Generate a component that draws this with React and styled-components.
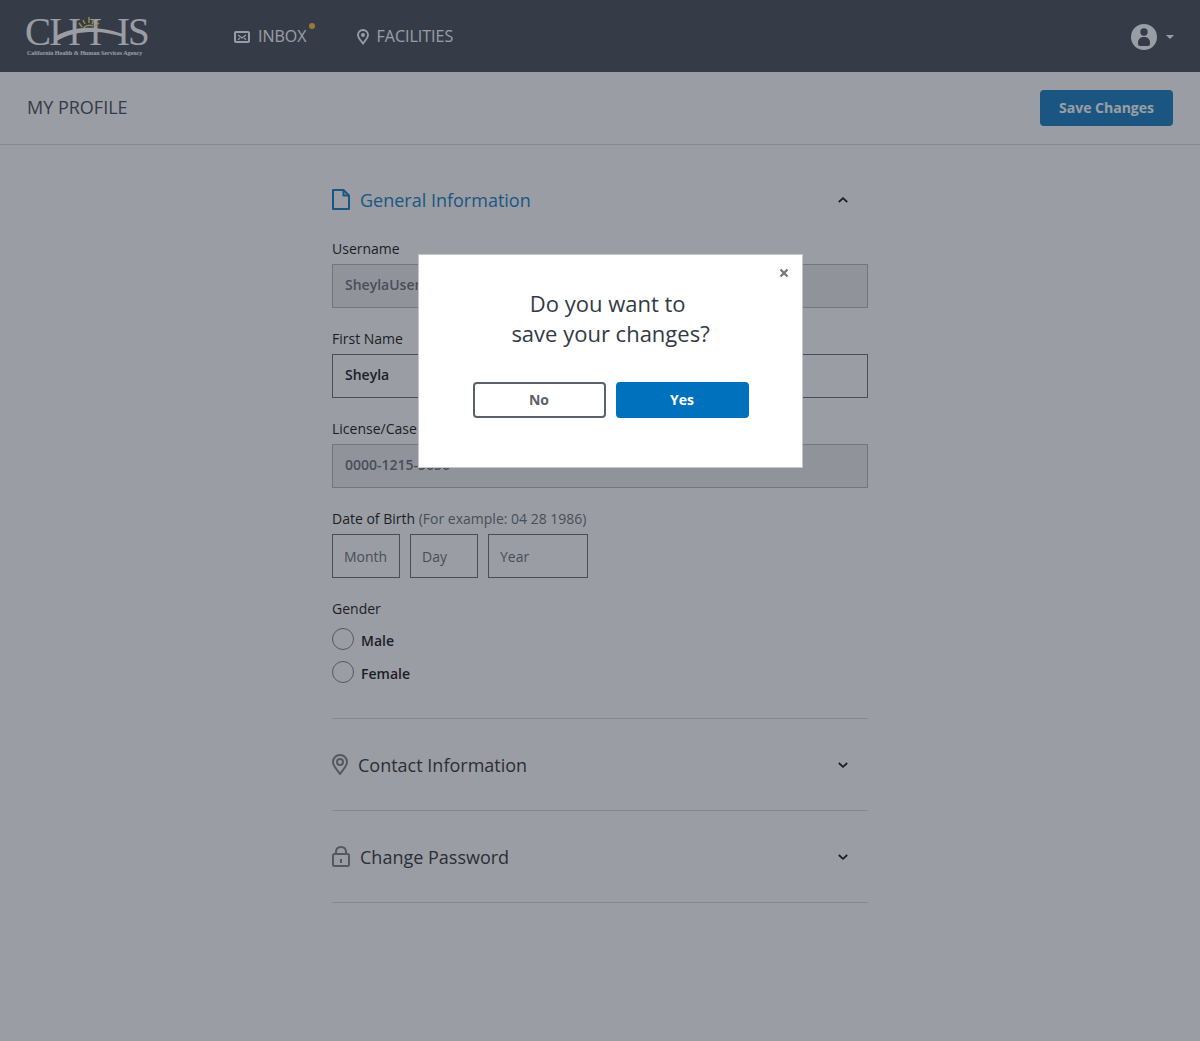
import React, { useState } from 'react';
import styled, { createGlobalStyle } from 'styled-components';

const navy = '#353c48';
const blue = '#0071bc';
const gray = '#5b616b';

const GlobalStyle = createGlobalStyle`
  *, *::before, *::after { box-sizing: border-box; }
  body {
    margin: 0;
    background: #fff;
    color: #000;
    font-family: 'Open Sans', 'Noto Sans', sans-serif;
    font-size: 14px;
    line-height: 20px;
  }
  button, input { font: inherit; color: inherit; }
`;

const Page = styled.div`
  min-height: 100vh;
`;

const TopBar = styled.header`
  display: flex;
  align-items: center;
  height: 72px;
  padding: 2px 26px 0 24px;
  background: ${navy};
  color: #fff;
`;

const Brand = styled.a`
  display: block;
  height: 70px;
  color: inherit;
`;

const Nav = styled.nav`
  display: flex;
  gap: 50px;
  flex: 1;
  margin-left: 82px;
`;

const NavLink = styled.a`
  position: relative;
  display: flex;
  align-items: center;
  gap: 8px;
  color: inherit;
  font-size: 16px;
  font-weight: 500;
  line-height: 24px;
  text-decoration: none;
`;

const NavText = styled.span`
  padding-bottom: 2px;
`;

const Dot = styled.span`
  position: absolute;
  top: -1px;
  right: -8px;
  width: 6px;
  height: 6px;
  border-radius: 50%;
  background: #fdb81e;
`;

const AccountButton = styled.button`
  display: flex;
  align-items: center;
  gap: 9px;
  padding: 0;
  border: 0;
  background: none;
`;

const TitleBar = styled.div`
  display: flex;
  align-items: center;
  justify-content: space-between;
  height: 73px;
  padding: 0 27px;
  border-bottom: 1px solid #d6d7d9;
`;

const PageTitle = styled.h1`
  margin: 0;
  padding-bottom: 2px;
  color: #323a45;
  font-size: 18px;
  font-weight: 400;
  line-height: 24px;
`;

const Button = styled.button`
  width: 133px;
  height: 36px;
  padding: 0;
  border: 2px solid ${(p) => (p.$outline ? gray : blue)};
  border-radius: 4px;
  background: ${(p) => (p.$outline ? '#fff' : blue)};
  color: ${(p) => (p.$outline ? gray : '#fff')};
  font-weight: 700;
`;

const Main = styled.main`
  width: 100%;
  max-width: 536px;
  margin: 0 auto;
  padding-top: 9px;
`;

const Section = styled.section`
  padding: 21px 0;
  border-bottom: 1px solid #d6d7d9;
`;

const SectionHeading = styled.h2`
  margin: 0;
`;

const SectionToggle = styled.button`
  display: flex;
  align-items: center;
  gap: 10px;
  width: 100%;
  height: 49px;
  padding: 0 20px 0 0;
  border: 0;
  background: none;
  color: ${(p) => (p.$open ? blue : '#212121')};
  font-size: 18px;
  font-weight: 400;
  line-height: 24px;
  text-align: left;
`;

const SectionTitle = styled.span`
  flex: 1;
`;

const Fields = styled.form`
  display: flex;
  flex-direction: column;
  gap: 21px;
  padding: 15px 0 14px;
`;

const Field = styled.div`
  display: flex;
  flex-direction: column;
  gap: 5px;
`;

const Group = styled.fieldset`
  margin: 0;
  padding: 0;
  border: 0;
`;

const Legend = styled.legend`
  padding: 0;
  margin-bottom: ${(p) => (p.$spaced ? 9 : 5)}px;
`;

const Hint = styled.span`
  color: ${gray};
`;

const TextInput = styled.input`
  width: 100%;
  height: 44px;
  padding: 0 12px 3px;
  border: 1px solid ${gray};
  border-radius: 0;
  background: #fff;
  font-weight: 600;
  &:disabled {
    border-color: #aeb0b5;
    background: #ebebed;
    color: ${gray};
  }
`;

const DateRow = styled.div`
  display: flex;
  gap: 10px;
`;

const DateInput = styled.input`
  width: ${(p) => (p.$wide ? 100 : 68)}px;
  height: 44px;
  padding: 0 11px;
  border: 1px solid ${gray};
  border-radius: 0;
  background: #fff;
  &::placeholder { color: ${gray}; opacity: 1; }
`;

const RadioList = styled.div`
  display: flex;
  flex-direction: column;
  gap: 11px;
`;

const RadioLabel = styled.label`
  display: flex;
  align-items: center;
  gap: 7px;
  height: 22px;
  font-weight: 600;
`;

const Radio = styled.input`
  appearance: none;
  width: 22px;
  height: 22px;
  margin: 0;
  border: 1px solid #757575;
  border-radius: 50%;
  &:checked { background: ${blue}; box-shadow: inset 0 0 0 4px #fff; }
`;

const RadioText = styled.span`
  padding-top: 3px;
`;

const Overlay = styled.div`
  position: fixed;
  inset: 0;
  display: flex;
  align-items: flex-start;
  justify-content: center;
  padding: 254px 0 0 21px;
  background: rgba(53, 60, 72, 0.5);
`;

const Modal = styled.div`
  position: relative;
  width: 385px;
  padding: 33px 20px 49px;
  border: 1px solid #c4c6ca;
  background: #fff;
  text-align: center;
`;

const CloseButton = styled.button`
  position: absolute;
  top: 8px;
  right: 8px;
  display: flex;
  align-items: center;
  justify-content: center;
  width: 20px;
  height: 20px;
  padding: 0;
  border: 0;
  background: none;
`;

const ModalTitle = styled.h2`
  margin: 0 0 34px;
  color: #323a45;
  font-size: 22px;
  font-weight: 400;
  line-height: 30px;
`;

const Actions = styled.div`
  display: flex;
  justify-content: center;
  gap: 10px;
`;

const Logo = () => (
  <svg width="128" height="70" viewBox="-2 -12 128 70" role="img" aria-label="CHHS" fill="currentColor">
    <g fontFamily="'Liberation Serif', serif" fontSize="39">
      <text x="-1" y="31">C</text>
      <text x="23" y="31">I</text>
      <text x="42" y="31">I</text>
      <text x="63" y="31">I</text>
      <text x="91" y="31">I</text>
      <text x="102" y="31">S</text>
    </g>
    <path d="M30 22 C42 15 58 13 68 14 C80 15 88 17 97 20 L97 23 C88 20 78 18 68 18 C54 18 42 20 29 28 Z" />
    <g stroke="#f7d64a" strokeWidth="1.5" fill="none">
      <path d="M57 14 Q62 10 67 12" />
      <path d="M53 9 L56 13 M57 6 L59 10 M63 3 V9 M68 5 L66 10 M73 9 L69 12" />
    </g>
    <text x="1" y="41" fontFamily="'Liberation Serif', serif" fontSize="6" fontWeight="700">California Health &amp; Human Services Agency</text>
  </svg>
);

const InboxIcon = () => (
  <svg width="16" height="12" viewBox="0 0 16 12" fill="none" stroke="currentColor" aria-hidden="true">
    <rect x="1" y="1" width="14" height="10" rx="1" strokeWidth="2" />
    <path d="M4 4 L8 7 L12 4 M4 8.7 L6 7 M12 8.7 L10 7" strokeWidth="1.2" />
  </svg>
);

const FacilityIcon = () => (
  <svg width="12" height="16" viewBox="0 0 12 16" aria-hidden="true">
    <path d="M6 1 C3.2 1 1 3.2 1 6 C1 9 4.2 12 6 14.6 C7.8 12 11 9 11 6 C11 3.2 8.8 1 6 1 Z" fill="none" stroke="currentColor" strokeWidth="1.8" />
    <circle cx="6" cy="6" r="2" fill="currentColor" />
  </svg>
);

const AvatarIcon = () => (
  <svg width="26" height="26" viewBox="0 0 26 26" aria-hidden="true">
    <circle cx="13" cy="13" r="13" fill="#fff" />
    <circle cx="13" cy="8" r="3.7" fill={navy} />
    <path d="M7 20 V18.5 C7 15 9.5 13 13 13 C16.5 13 19 15 19 18.5 V20 Q19 22 17 22 H9 Q7 22 7 20 Z" fill={navy} />
  </svg>
);

const CaretIcon = () => (
  <svg width="8" height="4" viewBox="0 0 8 4" aria-hidden="true">
    <path d="M0 0 H8 L4 4 Z" fill="#fff" />
  </svg>
);

const FileIcon = () => (
  <svg width="18" height="21" viewBox="0 0 18 21" fill="none" stroke="currentColor" strokeWidth="2" strokeLinejoin="round" aria-hidden="true">
    <path d="M1 1 H11.5 L17 6.5 V20 H1 Z" />
    <path d="M11.5 1 V6.5 H17" />
  </svg>
);

const PinIcon = () => (
  <svg width="16" height="21" viewBox="0 0 16 21" fill="none" stroke="#757575" strokeWidth="2" strokeLinejoin="round" aria-hidden="true">
    <path d="M8 1 C4 1 1 4 1 8 C1 12 5 15.5 8 20 C11 15.5 15 12 15 8 C15 4 12 1 8 1 Z" />
    <circle cx="8" cy="8" r="3" />
  </svg>
);

const LockIcon = () => (
  <svg width="18" height="21" viewBox="0 0 18 21" fill="none" stroke="#757575" strokeWidth="2" aria-hidden="true">
    <rect x="1" y="8" width="16" height="12" rx="1.5" />
    <path d="M4 8 V6 C4 3 6 1 9 1 C12 1 14 3 14 6 V8 M9 13 V17" />
  </svg>
);

const Chevron = ({ up }) => (
  <svg width="10" height="6" viewBox="0 0 10 6" fill="none" stroke="#000" strokeWidth="1.8" aria-hidden="true">
    <path d={up ? 'M0.8 5 L5 1.2 L9.2 5' : 'M0.8 1 L5 4.8 L9.2 1'} />
  </svg>
);

const AccordionSection = ({ icon, title, open, onToggle, children }) => (
  <Section>
    <SectionHeading>
      <SectionToggle type="button" $open={open} aria-expanded={open} onClick={onToggle}>
        {icon}
        <SectionTitle>{title}</SectionTitle>
        <Chevron up={open} />
      </SectionToggle>
    </SectionHeading>
    {open && children}
  </Section>
);

const GeneralForm = () => (
  <Fields>
    <Field>
      <label htmlFor="username">Username</label>
      <TextInput id="username" defaultValue="SheylaUser" disabled />
    </Field>
    <Field>
      <label htmlFor="first-name">First Name</label>
      <TextInput id="first-name" defaultValue="Sheyla" />
    </Field>
    <Field>
      <label htmlFor="license">License/Case</label>
      <TextInput id="license" defaultValue="0000-1215-5656" disabled />
    </Field>
    <Group>
      <Legend>
        Date of Birth <Hint>(For example: 04 28 1986)</Hint>
      </Legend>
      <DateRow>
        <DateInput aria-label="Month" placeholder="Month" />
        <DateInput aria-label="Day" placeholder="Day" />
        <DateInput aria-label="Year" placeholder="Year" $wide />
      </DateRow>
    </Group>
    <Group>
      <Legend $spaced>Gender</Legend>
      <RadioList>
        {['Male', 'Female'].map((name) => (
          <RadioLabel key={name}>
            <Radio type="radio" name="gender" value={name} />
            <RadioText>{name}</RadioText>
          </RadioLabel>
        ))}
      </RadioList>
    </Group>
  </Fields>
);

export default function App() {
  const [confirming, setConfirming] = useState(true);
  const [openSection, setOpenSection] = useState('general');
  const toggle = (name) => () => setOpenSection(openSection === name ? '' : name);
  const close = () => setConfirming(false);

  return (
    <>
      <GlobalStyle />
      <Page>
        <TopBar>
          <Brand href="#home"><Logo /></Brand>
          <Nav>
            <NavLink href="#inbox"><InboxIcon /><NavText>INBOX</NavText><Dot /></NavLink>
            <NavLink href="#facilities"><FacilityIcon /><NavText>FACILITIES</NavText></NavLink>
          </Nav>
          <AccountButton type="button" aria-label="Account">
            <AvatarIcon />
            <CaretIcon />
          </AccountButton>
        </TopBar>
        <TitleBar>
          <PageTitle>MY PROFILE</PageTitle>
          <Button type="button" onClick={() => setConfirming(true)}>Save Changes</Button>
        </TitleBar>
        <Main>
          <AccordionSection icon={<FileIcon />} title="General Information" open={openSection === 'general'} onToggle={toggle('general')}>
            <GeneralForm />
          </AccordionSection>
          <AccordionSection icon={<PinIcon />} title="Contact Information" open={openSection === 'contact'} onToggle={toggle('contact')} />
          <AccordionSection icon={<LockIcon />} title="Change Password" open={openSection === 'password'} onToggle={toggle('password')} />
        </Main>
      </Page>
      {confirming && (
        <Overlay>
          <Modal role="dialog" aria-modal="true" aria-labelledby="confirm-title">
            <CloseButton type="button" aria-label="Close" onClick={close}>
              <svg width="8" height="8" viewBox="0 0 8 8" stroke="#757575" strokeWidth="2.2" aria-hidden="true">
                <path d="M0.5 0.5 L7.5 7.5 M7.5 0.5 L0.5 7.5" />
              </svg>
            </CloseButton>
            <ModalTitle id="confirm-title">Do you want to&nbsp;<br />save your changes?</ModalTitle>
            <Actions>
              <Button type="button" $outline onClick={close}>No</Button>
              <Button type="button" onClick={close}>Yes</Button>
            </Actions>
          </Modal>
        </Overlay>
      )}
    </>
  );
}
